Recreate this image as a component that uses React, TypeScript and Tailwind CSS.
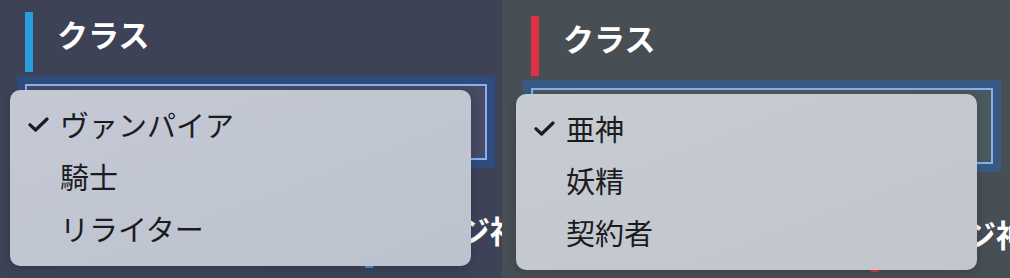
import React from "react";

type PanelProps = {
  accent: string;
  bg: string;
  ring: string;
  field: string;
  menu: string;
  items: string[];
  pad: string;
  width: string;
};

const Check = () => (
  <svg width="21" height="15" viewBox="0 0 21 15" fill="none" className="shrink-0">
    <path d="M2 7.8 L7.6 13 L19 2" stroke="#1c1c1f" strokeWidth="3.2" strokeLinecap="round" strokeLinejoin="round" />
  </svg>
);

const Heading = ({ accent, label, className = "" }: { accent: string; label: string; className?: string }) => (
  <div className={`flex items-start ${className}`}>
    <div className={`w-2 h-[60px] shrink-0 ${accent}`} />
    <h2 className="ml-[24px] mt-[3px] text-[31px] leading-[37px] font-bold text-white whitespace-nowrap">{label}</h2>
  </div>
);

const Panel = ({ accent, bg, ring, field, menu, items, pad, width }: PanelProps) => (
  <section className={`relative h-full overflow-hidden shrink-0 ${bg} ${width}`}>
    <div className={pad}>
      <Heading accent={accent} label="クラス" />

      {/* select with its open native popup */}
      <div className={`relative mt-[12px] w-[462px] h-[76px] border-2 border-[#86b1ee] ${ring} ${field}`}>
        <div
          className={`absolute left-[-17px] top-[4px] z-10 w-[461px] h-[176px] rounded-[10px] pt-[8px] shadow-[0_2px_10px_rgba(0,0,0,0.18)] bg-gradient-to-br ${menu}`}
        >
          {items.map((item, i) => (
            <div key={item} className="flex items-center h-[52px]">
              <div className="w-[50px] pl-[18px] flex items-center">{i === 0 && <Check />}</div>
              <span className="text-[29px] leading-[52px] text-[#1c1c1f] whitespace-nowrap">{item}</span>
            </div>
          ))}
        </div>
      </div>

      <Heading accent={accent} label="リンジ神" className="mt-[48px] ml-[340px]" />
    </div>
  </section>
);

export default function App() {
  return (
    <div className="flex w-[1010px] h-[278px] overflow-hidden font-['Noto_Sans_CJK_JP','Noto_Sans',sans-serif]">
      <Panel
        accent="bg-[#2a9fdf]"
        bg="bg-[#3d4257]"
        ring="shadow-[0_0_0_8px_#2f4b7d]"
        field="bg-[#464a62]"
        menu="from-[#c5c9d6] to-[#bdc2cf]"
        items={["ヴァンパイア", "騎士", "リライター"]}
        pad="pl-[25px] pt-[12px]"
        width="w-[502px]"
      />
      <Panel
        accent="bg-[#dc3244]"
        bg="bg-[#474e54]"
        ring="shadow-[0_0_0_8px_#385a82]"
        field="bg-[#4b585d]"
        menu="from-[#c7ccd3] to-[#c0c6cc]"
        items={["亜神", "妖精", "契約者"]}
        pad="pl-[29px] pt-[16px]"
        width="w-[508px]"
      />
    </div>
  );
}
